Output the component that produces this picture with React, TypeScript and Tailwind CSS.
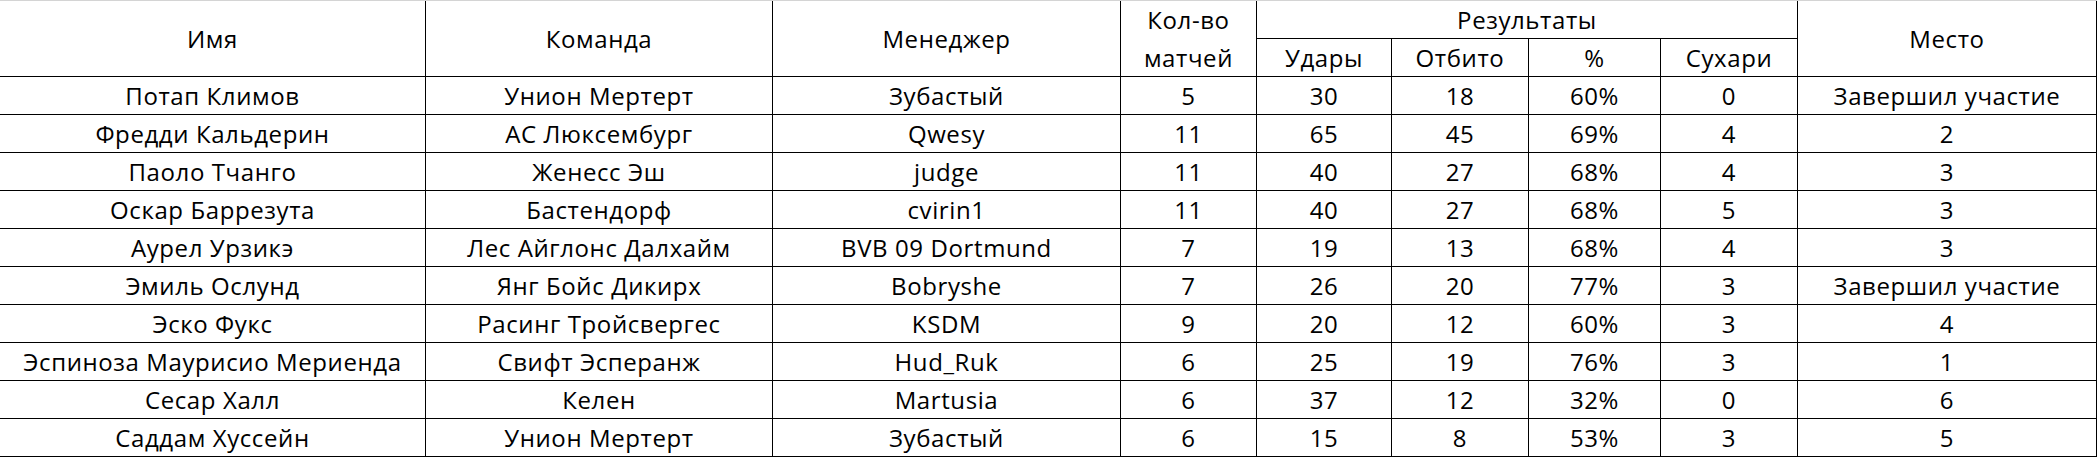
import React from 'react';

type Row = [string, string, string, string, string, string, string, string, string];

const ROWS: Row[] = [
  ['Потап Климов', 'Унион Мертерт', 'Зубастый', '5', '30', '18', '60%', '0', 'Завершил участие'],
  ['Фредди Кальдерин', 'АС Люксембург', 'Qwesy', '11', '65', '45', '69%', '4', '2'],
  ['Паоло Тчанго', 'Женесс Эш', 'judge', '11', '40', '27', '68%', '4', '3'],
  ['Оскар Баррезута', 'Бастендорф', 'cvirin1', '11', '40', '27', '68%', '5', '3'],
  ['Аурел Урзикэ', 'Лес Айглонс Далхайм', 'BVB 09 Dortmund', '7', '19', '13', '68%', '4', '3'],
  ['Эмиль Ослунд', 'Янг Бойс Дикирх', 'Bobryshe', '7', '26', '20', '77%', '3', 'Завершил участие'],
  ['Эско Фукс', 'Расинг Тройсвергес', 'KSDM', '9', '20', '12', '60%', '3', '4'],
  ['Эспиноза Маурисио Мериенда', 'Свифт Эсперанж', 'Hud_Ruk', '6', '25', '19', '76%', '3', '1'],
  ['Сесар Халл', 'Келен', 'Martusia', '6', '37', '12', '32%', '0', '6'],
  ['Саддам Хуссейн', 'Унион Мертерт', 'Зубастый', '6', '15', '8', '53%', '3', '5'],
];

const cell = 'border-r border-b border-black text-center leading-[38px] whitespace-nowrap';
const tall = 'row-span-2 border-r border-b border-black flex items-center justify-center leading-[38px] whitespace-nowrap';

export default function App() {
  return (
    <div
      className="w-[2097px] h-[457px] bg-white text-black text-[24px] tracking-[0.6px] overflow-hidden"
      style={{ fontFamily: '"Open Sans", "Noto Sans", sans-serif' }}
    >
      <div className="border-t border-[#d4d4d4] grid grid-cols-[426px_347px_348px_136px_135px_137px_132px_137px_299px] grid-rows-[repeat(12,38px)]">
        {/* header, first line */}
        <div className={tall}>Имя</div>
        <div className={tall}>Команда</div>
        <div className={tall}>Менеджер</div>
        <div className="row-span-2 border-r border-b border-black text-center leading-[38px] whitespace-nowrap">
          <div>Кол-во</div>
          <div>матчей</div>
        </div>
        <div className={`col-span-4 ${cell}`}>Результаты</div>
        <div className={tall}>Место</div>

        {/* header, second line */}
        <div className={cell}>Удары</div>
        <div className={cell}>Отбито</div>
        <div className={cell}>%</div>
        <div className={cell}>Сухари</div>

        {ROWS.map((r, i) =>
          r.map((v, j) => (
            <div key={`${i}-${j}`} className={cell}>
              {v}
            </div>
          ))
        )}
      </div>
    </div>
  );
}
